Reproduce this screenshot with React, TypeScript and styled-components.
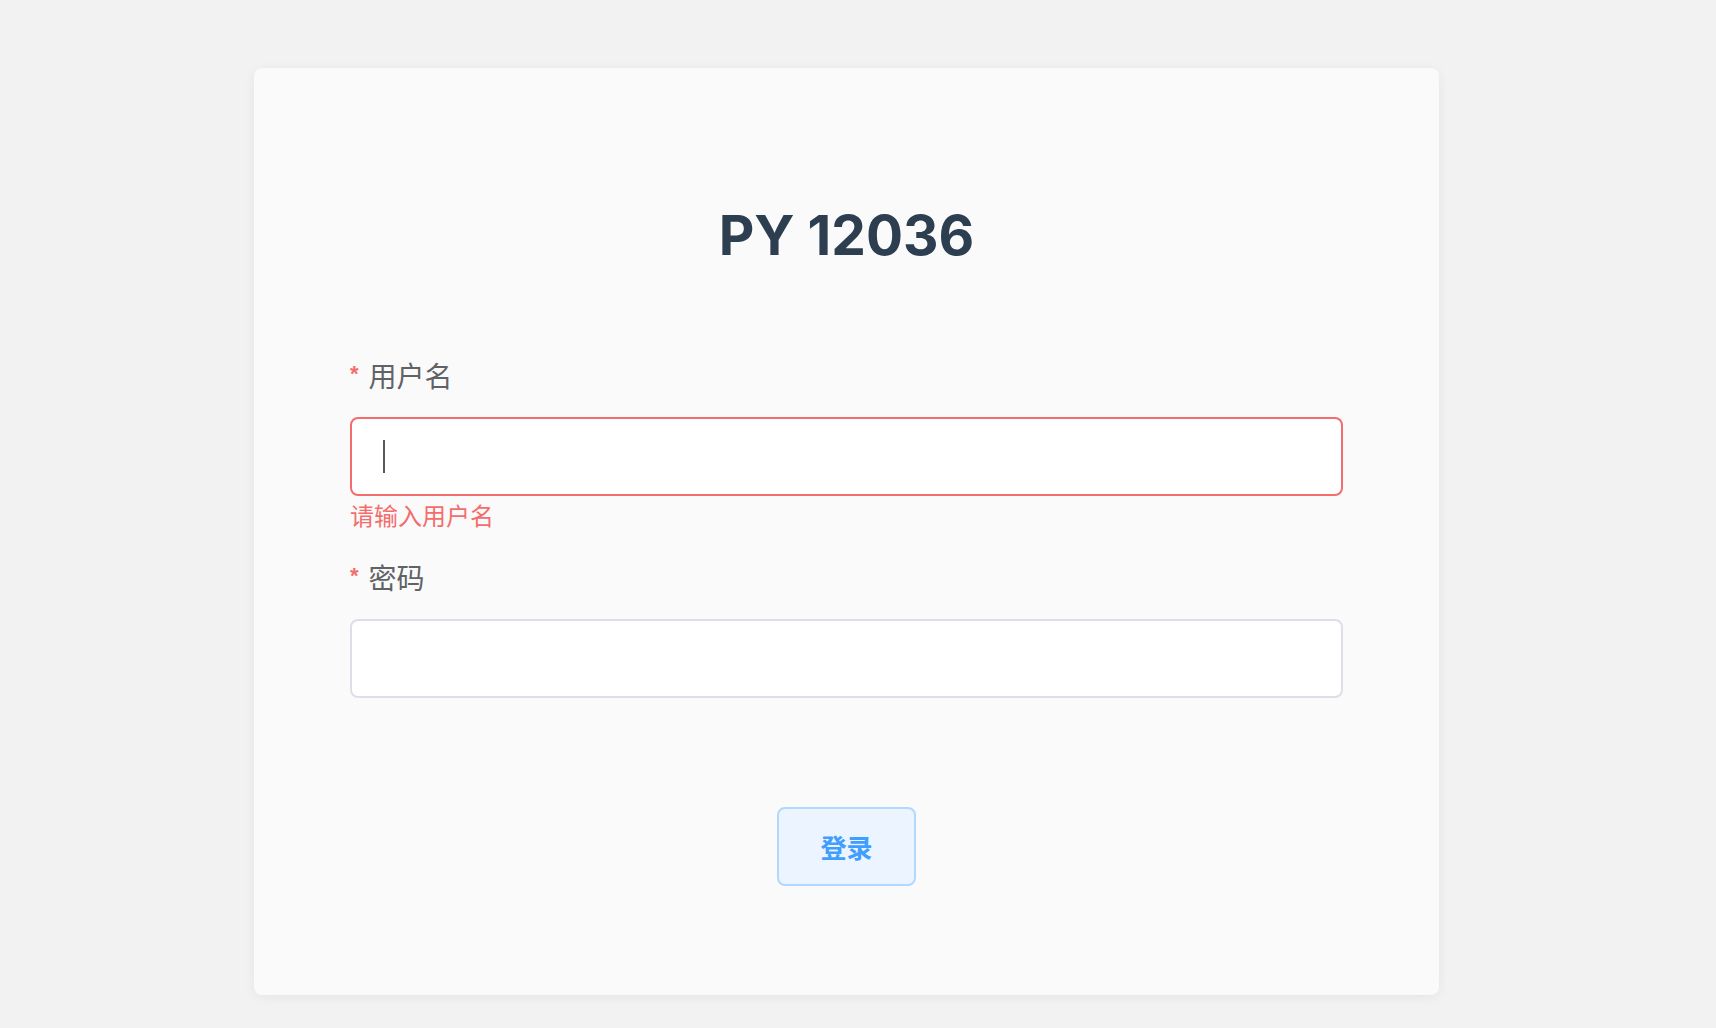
import React from "react";
import styled, { createGlobalStyle } from "styled-components";

const GlobalStyle = createGlobalStyle`
  html, body {
    margin: 0;
    padding: 0;
    background: #f2f2f2;
  }
  body {
    font-family: Inter, "Noto Sans CJK SC", "Noto Sans", sans-serif;
  }
  * { box-sizing: border-box; }
`;

const Page = styled.div`
  min-height: 1028px;
  display: flex;
  justify-content: center;
  padding-top: 68px;
  padding-right: 23px;
`;

const Card = styled.div`
  width: 1185px;
  height: 927px;
  background: #fafafa;
  border-radius: 8px;
  box-shadow: 0 2px 12px rgba(0, 0, 0, 0.06);
  padding: 140px 96px 0;
  display: flex;
  flex-direction: column;
`;

const Title = styled.h1`
  margin: 0;
  font-family: Inter, sans-serif;
  font-weight: 700;
  font-size: 55px;
  line-height: 55px;
  color: #2c3e50;
  text-align: center;
`;

const Form = styled.form`
  margin-top: 92px;
  display: flex;
  flex-direction: column;
`;

const FormItem = styled.div<{ $gapAfter: number }>`
  display: flex;
  flex-direction: column;
  margin-bottom: ${(p) => p.$gapAfter}px;
`;

const Label = styled.label`
  height: 40px;
  display: flex;
  align-items: center;
  font-family: "Noto Sans CJK SC", sans-serif;
  font-size: 28px;
  line-height: 40px;
  color: #606266;
  margin-bottom: 22px;
`;

const Star = styled.span`
  color: #f56c6c;
  font-size: 22px;
  font-weight: 700;
  margin-right: 10px;
  font-family: "Liberation Sans", sans-serif;
  position: relative;
  top: -1px;
`;

const Field = styled.div`
  position: relative;
`;

const Input = styled.input<{ $invalid?: boolean }>`
  display: block;
  width: 100%;
  height: 79px;
  border: 2px solid ${(p) => (p.$invalid ? "#f56c6c" : "#dcdfe6")};
  border-radius: 8px;
  background: #ffffff;
  padding: 0 31px;
  font-size: 26px;
  color: #606266;
  outline: none;
`;

const Caret = styled.span`
  position: absolute;
  left: 33px;
  top: 23px;
  width: 2px;
  height: 33px;
  background: #555a60;
`;

const ErrorText = styled.div`
  margin-top: 7px;
  height: 24px;
  font-family: "Noto Sans CJK SC", sans-serif;
  font-size: 24px;
  line-height: 24px;
  color: #f56c6c;
`;

const Actions = styled.div`
  display: flex;
  justify-content: center;
  margin-top: 109px;
`;

const Button = styled.button`
  width: 139px;
  height: 79px;
  border: 2px solid #b3d8ff;
  border-radius: 8px;
  background: #ecf5ff;
  color: #409eff;
  font-family: "Noto Sans CJK SC", sans-serif;
  font-weight: 700;
  font-size: 26px;
  cursor: pointer;
`;

export default function App() {
  return (
    <>
      <GlobalStyle />
      <Page>
        <Card>
          <Title>PY 12036</Title>
          <Form onSubmit={(e) => e.preventDefault()}>
            <FormItem $gapAfter={30}>
              <Label>
                <Star>*</Star>用户名
              </Label>
              <Field>
                <Input $invalid type="text" />
                <Caret />
              </Field>
              <ErrorText>请输入用户名</ErrorText>
            </FormItem>
            <FormItem $gapAfter={0}>
              <Label>
                <Star>*</Star>密码
              </Label>
              <Field>
                <Input type="password" />
              </Field>
            </FormItem>
            <Actions>
              <Button type="submit">登录</Button>
            </Actions>
          </Form>
        </Card>
      </Page>
    </>
  );
}
